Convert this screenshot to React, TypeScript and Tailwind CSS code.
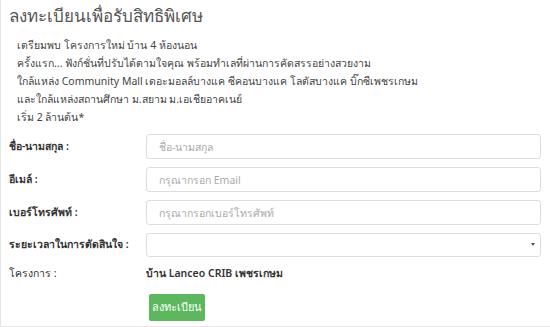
import React from 'react';

const rows = [
  { label: 'ชื่อ-นามสกุล :', placeholder: 'ชื่อ-นามสกุล' },
  { label: 'อีเมล์ :', placeholder: 'กรุณากรอก Email' },
  { label: 'เบอร์โทรศัพท์ :', placeholder: 'กรุณากรอกเบอร์โทรศัพท์' },
];

const lines = [
  'เตรียมพบ โครงการใหม่ บ้าน 4 ห้องนอน',
  'ครั้งแรก... ฟังก์ชั่นที่ปรับได้ตามใจคุณ พร้อมทำเลที่ผ่านการคัดสรรอย่างสวยงาม',
  'ใกล้แหล่ง Community Mall เดอะมอลล์บางแค ซีคอนบางแค โลตัสบางแค บิ๊กซีเพชรเกษม',
  'และใกล้แหล่งสถานศึกษา ม.สยาม ม.เอเชียอาคเนย์',
  'เริ่ม 2 ล้านต้น*',
];

const App: React.FC = () => {
  return (
    <div
      className="w-[550px] h-[327px] bg-white border-l border-b border-[#e5e5e5] px-2 overflow-hidden"
      style={{ fontFamily: '"Noto Sans", "Liberation Sans", sans-serif' }}
    >
      {/* title */}
      <h3 className="pt-[4px] text-[17px] leading-[24px] text-[#555]">ลงทะเบียนเพื่อรับสิทธิพิเศษ</h3>

      {/* description */}
      <div className="mt-[8px] pl-2 text-[10.5px] leading-[18px] text-[#444]">
        {lines.map((l) => (
          <p key={l}>{l}</p>
        ))}
      </div>

      {/* form */}
      <div className="mt-[8px] flex flex-col gap-[8px]">
        {rows.map((r) => (
          <div key={r.label} className="flex items-center">
            <label className="w-[137px] text-[10.5px] font-semibold text-[#333]">{r.label}</label>
            <input
              className="w-[395px] h-[25px] rounded-[3px] border border-[#ddd] px-3 text-[10.5px] outline-none placeholder:text-[#aaa]"
              placeholder={r.placeholder}
            />
          </div>
        ))}
        <div className="flex items-center">
          <label className="w-[137px] text-[10.5px] font-semibold text-[#333]">ระยะเวลาในการตัดสินใจ :</label>
          <div className="relative w-[395px] h-[24px] rounded-[3px] border border-[#ddd] bg-white">
            <span className="absolute right-[5px] top-[9px] w-0 h-0 border-l-[2px] border-r-[2px] border-t-[3px] border-l-transparent border-r-transparent border-t-[#555]" />
          </div>
        </div>
      </div>

      <div className="mt-[9px] flex items-center">
        <span className="w-[137px] text-[10.5px] text-[#333]">โครงการ :</span>
        <span className="text-[10.5px] font-semibold text-[#333]">บ้าน Lanceo CRIB เพชรเกษม</span>
      </div>

      <div className="mt-[11px] pl-[140px]">
        <button className="w-[56px] h-[27px] rounded-[2px] bg-[#5cb85c] text-white text-[11px]">ลงทะเบียน</button>
      </div>
    </div>
  );
};

export default App;
